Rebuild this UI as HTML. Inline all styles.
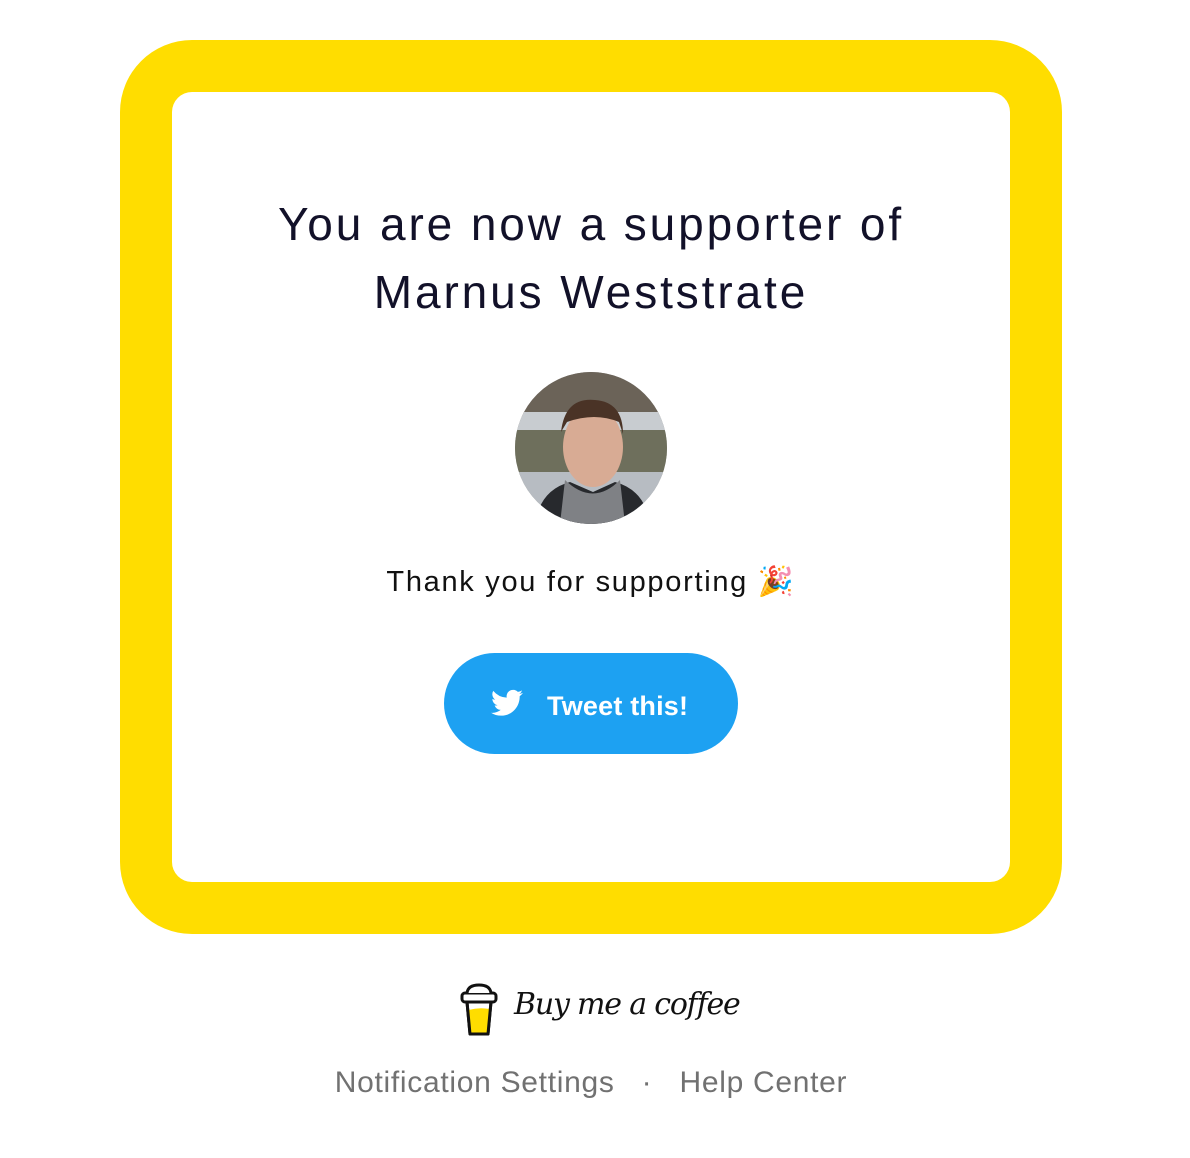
<!DOCTYPE html>
<html><head><meta charset="utf-8"><style>
html,body{margin:0;padding:0;background:#fff;width:1190px;height:1158px;overflow:hidden;font-family:"Liberation Sans",sans-serif}
.frame{position:absolute;left:120px;top:40px;width:942px;height:894px;background:#FFDD00;border-radius:72px}
.card{position:absolute;left:52px;top:52px;width:838px;height:790px;background:#fff;border-radius:20px}
h1{position:absolute;left:0;top:190px;width:1182px;margin:0;text-align:center;font-weight:normal;font-size:46px;line-height:68px;color:#121129;letter-spacing:2.9px}
.av{position:absolute;left:515px;top:372px;width:152px;height:152px;border-radius:50%;overflow:hidden}
.thanks{position:absolute;left:0;width:1182px;top:565px;text-align:center;font-size:29px;color:#111;letter-spacing:1.7px}
.btn{position:absolute;left:444px;top:653px;width:294px;height:101px;border-radius:51px;background:#1DA1F2;color:#fff;font-weight:bold;font-size:27px}
.btn span{position:absolute;left:103px;top:38px;letter-spacing:0.2px}
.btn svg{position:absolute;left:47px;top:36px}
.links{position:absolute;left:0;width:1182px;top:1066px;text-align:center;font-size:30px;color:#717171;letter-spacing:0.7px}
.logo{position:absolute;left:458px;top:982px}
.logo .t{position:absolute;left:56px;top:5px;font-family:"DejaVu Serif","Liberation Serif",serif;font-style:italic;font-size:30px;color:#111;white-space:nowrap;letter-spacing:-1.2px}
</style></head><body>
<div class="frame"><div class="card"></div></div>
<h1>You are now a supporter of<br>Marnus Weststrate</h1>
<div class="av"><svg width="152" height="152" viewBox="0 0 152 152">
<rect width="152" height="152" fill="#8a8a86"/>
<rect width="152" height="45" fill="#6b6358"/>
<rect y="40" width="152" height="20" fill="#c8ccd0"/>
<rect y="58" width="152" height="45" fill="#6e6f5c"/>
<rect y="100" width="152" height="52" fill="#b7bcc2"/>
<ellipse cx="78" cy="75" rx="30" ry="40" fill="#d8ab94"/>
<path d="M46 60 Q50 25 80 28 Q108 30 108 62 L104 50 Q80 40 52 50 Z" fill="#4a3326"/>
<path d="M20 152 Q25 118 55 110 L78 120 L100 110 Q130 118 135 152 Z" fill="#27292d"/>
<path d="M50 108 Q78 135 105 108 L110 152 L45 152 Z" fill="#7f8185"/>
</svg></div>
<div class="thanks">Thank you for supporting 🎉</div>
<div class="btn"><svg width="32" height="28" viewBox="0 0 24 20"><path fill="#fff" d="M24 2.4a9.8 9.8 0 0 1-2.8.8A4.9 4.9 0 0 0 23.3.5a9.9 9.9 0 0 1-3.1 1.2A4.9 4.9 0 0 0 11.8 6 14 14 0 0 1 1.7.9a4.9 4.9 0 0 0 1.5 6.6A4.9 4.9 0 0 1 1 6.9a4.9 4.9 0 0 0 3.9 4.8 4.9 4.9 0 0 1-2.2.1 4.9 4.9 0 0 0 4.6 3.4A9.900 9.9 0 0 1 0 17.3 14 14 0 0 0 7.5 19.5c9.1 0 14-7.5 14-14v-.6A10 10 0 0 0 24 2.4z"/></svg><span>Tweet this!</span></div>
<div class="logo"><svg width="42" height="56" viewBox="0 0 42 56"><path d="M9 20 L33 20 L30 52 L12 52 Z" fill="#fff" stroke="#111" stroke-width="3" stroke-linejoin="round"/><path d="M10.5 28 Q21 25 31.5 27 L29.5 50.5 L13 50.5 Z" fill="#FFDD00"/><path d="M9 20 L33 20 L30 52 L12 52 Z" fill="none" stroke="#111" stroke-width="3" stroke-linejoin="round"/><rect x="4" y="11" width="34" height="9" rx="3" fill="#fff" stroke="#111" stroke-width="3"/><path d="M9 11 Q10 3 21 3 Q32 3 33 11" fill="#fff" stroke="#111" stroke-width="3"/></svg><div class="t">Buy me a coffee</div></div>
<div class="links">Notification Settings &nbsp;&nbsp;·&nbsp;&nbsp; Help Center</div>
</body></html>
